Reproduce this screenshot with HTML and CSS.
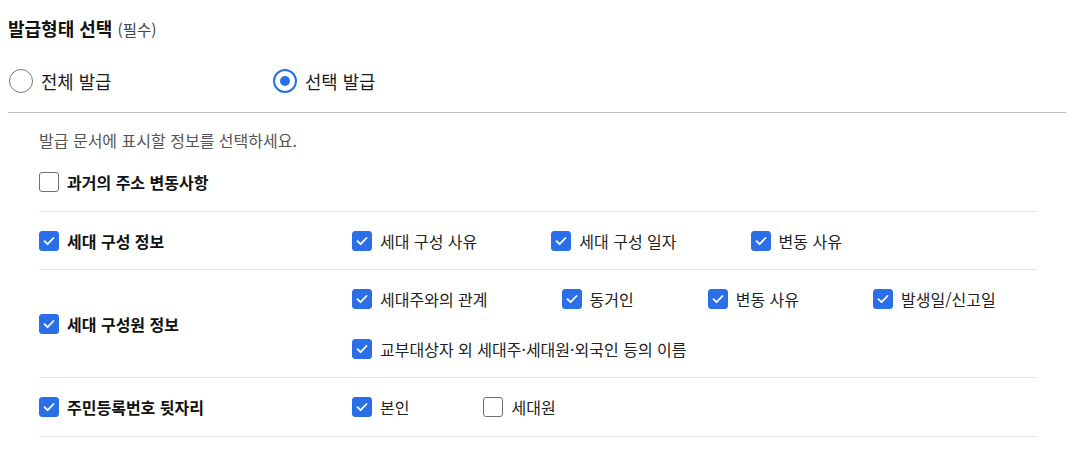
FILE: index.html
```html
<!DOCTYPE html>
<html lang="ko">
<head>
<meta charset="utf-8">
<link rel="stylesheet" href="styles.css">
</head>
<body>
<div class="page">
  <h2 class="title">발급형태 선택 <span class="req">(필수)</span></h2>
  <div class="radios">
    <label class="radio"><span class="rbox"></span>전체 발급</label>
    <label class="radio"><span class="rbox on"></span>선택 발급</label>
  </div>
  <div class="section">
    <p class="hint">발급 문서에 표시할 정보를 선택하세요.</p>
    <div class="row first">
      <label class="chk main"><span class="box"></span>과거의 주소 변동사항</label>
    </div>
    <div class="row">
      <div class="left"><label class="chk main"><span class="box on"><svg viewBox="0 0 20 20"><polyline points="5.5,10.2 8.6,13.2 14.5,7"/></svg></span>세대 구성 정보</label></div>
      <div class="opts">
        <label class="chk"><span class="box on"><svg viewBox="0 0 20 20"><polyline points="5.5,10.2 8.6,13.2 14.5,7"/></svg></span>세대 구성 사유</label>
        <label class="chk"><span class="box on"><svg viewBox="0 0 20 20"><polyline points="5.5,10.2 8.6,13.2 14.5,7"/></svg></span>세대 구성 일자</label>
        <label class="chk"><span class="box on"><svg viewBox="0 0 20 20"><polyline points="5.5,10.2 8.6,13.2 14.5,7"/></svg></span>변동 사유</label>
      </div>
    </div>
    <div class="row">
      <div class="left"><label class="chk main"><span class="box on"><svg viewBox="0 0 20 20"><polyline points="5.5,10.2 8.6,13.2 14.5,7"/></svg></span>세대 구성원 정보</label></div>
      <div class="opts">
        <label class="chk"><span class="box on"><svg viewBox="0 0 20 20"><polyline points="5.5,10.2 8.6,13.2 14.5,7"/></svg></span>세대주와의 관계</label>
        <label class="chk"><span class="box on"><svg viewBox="0 0 20 20"><polyline points="5.5,10.2 8.6,13.2 14.5,7"/></svg></span>동거인</label>
        <label class="chk"><span class="box on"><svg viewBox="0 0 20 20"><polyline points="5.5,10.2 8.6,13.2 14.5,7"/></svg></span>변동 사유</label>
        <label class="chk"><span class="box on"><svg viewBox="0 0 20 20"><polyline points="5.5,10.2 8.6,13.2 14.5,7"/></svg></span>발생일/신고일</label>
        <label class="chk"><span class="box on"><svg viewBox="0 0 20 20"><polyline points="5.5,10.2 8.6,13.2 14.5,7"/></svg></span>교부대상자 외 세대주·세대원·외국인 등의 이름</label>
      </div>
    </div>
    <div class="row last">
      <div class="left"><label class="chk main"><span class="box on"><svg viewBox="0 0 20 20"><polyline points="5.5,10.2 8.6,13.2 14.5,7"/></svg></span>주민등록번호 뒷자리</label></div>
      <div class="opts">
        <label class="chk"><span class="box on"><svg viewBox="0 0 20 20"><polyline points="5.5,10.2 8.6,13.2 14.5,7"/></svg></span>본인</label>
        <label class="chk"><span class="box"></span>세대원</label>
      </div>
    </div>
  </div>
</div>
</body>
</html>
```
FILE: styles.css
```css
* { box-sizing: border-box; }
body {
  margin: 0;
  background: #fff;
  font-family: "Noto Sans CJK KR", "Noto Sans", sans-serif;
  color: #1b1b1b;
}
.page { padding: 15px 6px 0 8px; }
.title {
  margin: 0;
  font-size: 18px;
  line-height: 26px;
  font-weight: 700;
  color: #111;
}
.req { font-size: 15.5px; font-weight: 400; color: #444; }
.radios {
  display: flex;
  margin-top: 27px;
  padding-bottom: 19px;
  border-bottom: 1px solid #bdbdc2;
}
.radio {
  display: flex;
  align-items: center;
  width: 264px;
  height: 24px;
  padding-left: 1px;
  font-size: 17.8px;
  line-height: 24px;
  color: #1b1b1b;
}
.rbox {
  width: 24px; height: 24px;
  border: 1px solid #767676;
  border-radius: 50%;
  margin-right: 8px;
  flex: none;
  display: flex; align-items: center; justify-content: center;
}
.rbox.on { border: 2px solid #2a6fe8; }
.rbox.on::after {
  content: "";
  width: 10px; height: 10px; border-radius: 50%;
  background: #2a6fe8;
}
.section { padding: 0 29px 0 31px; }
.hint {
  margin: 16px 0 0;
  font-size: 16px;
  line-height: 22px;
  color: #555;
}
.row {
  display: flex;
  align-items: center;
  padding: 17px 0 16px;
  border-bottom: 1px solid #e2e2e6;
}
.row.first { padding-top: 19px; padding-bottom: 17px; }
.row.last { padding-bottom: 17px; }
.left { width: 313px; flex: none; }
.opts {
  display: flex;
  flex-wrap: wrap;
  column-gap: 74px;
  row-gap: 26px;
}
.chk {
  display: flex;
  align-items: center;
  height: 24px;
  font-size: 16px;
  line-height: 24px;
  color: #222;
  white-space: nowrap;
}
.chk.main { font-weight: 700; color: #111; }
.box {
  width: 20px; height: 20px;
  border: 1px solid #6f6f6f;
  border-radius: 3px;
  margin-right: 8px;
  flex: none;
  display: flex;
}
.box.on { background: #2a6fe8; border-color: #2a6fe8; }
.box svg {
  width: 20px; height: 20px;
  margin: -1px;
  flex: none;
  fill: none;
  stroke: #fff;
  stroke-width: 1.8;
  stroke-linecap: round;
  stroke-linejoin: round;
}
```
